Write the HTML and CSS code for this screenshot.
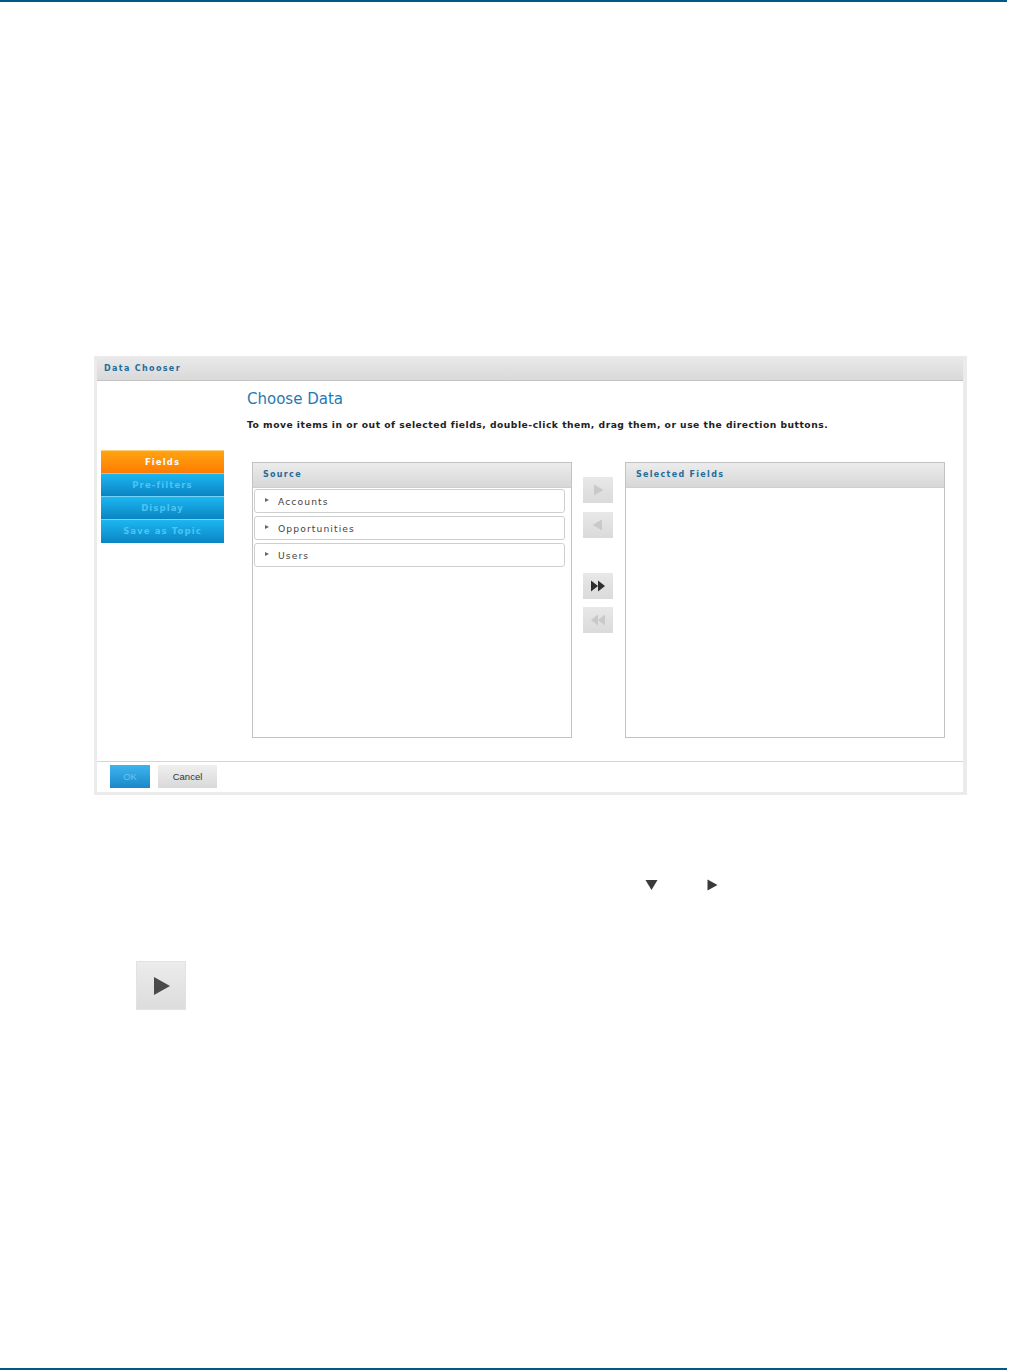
FILE: index.html
```html
<!DOCTYPE html>
<html>
<head>
<meta charset="utf-8">
<link rel="stylesheet" href="styles.css">
</head>
<body>
<div class="topline"></div>
<div class="page">
  <div class="dialog">
    <div class="dlg-header">Data Chooser</div>
    <div class="dlg-body">
      <div class="dlg-main">
        <nav class="nav">
          <div class="nav-item active">Fields</div>
          <div class="nav-item">Pre-filters</div>
          <div class="nav-item">Display</div>
          <div class="nav-item">Save as Topic</div>
        </nav>
        <div class="content">
          <h1 class="title">Choose Data</h1>
          <p class="instr">To move items in or out of selected fields, double-click them, drag them, or use the direction buttons.</p>
          <div class="chooser">
            <div class="panel">
              <div class="panel-head">Source</div>
              <div class="panel-body">
                <div class="item"><span class="tri"></span>Accounts</div>
                <div class="item"><span class="tri"></span>Opportunities</div>
                <div class="item"><span class="tri"></span>Users</div>
              </div>
            </div>
            <div class="arrows">
              <div class="abtn first"><svg width="12" height="12" viewBox="0 0 12 12"><path d="M2 0.5 L11.5 6 L2 11.5 Z" fill="#c9c9c9"/></svg></div>
              <div class="abtn b2"><svg width="12" height="12" viewBox="0 0 12 12"><path d="M10 0.5 L0.5 6 L10 11.5 Z" fill="#c9c9c9"/></svg></div>
              <div class="abtn gap"><svg width="16" height="12" viewBox="0 0 16 12"><path d="M1 0.5 L8 6 L1 11.5 Z M8 0.5 L15 6 L8 11.5 Z" fill="#2e2e2e"/></svg></div>
              <div class="abtn b4"><svg width="16" height="12" viewBox="0 0 16 12"><path d="M15 0.5 L8 6 L15 11.5 Z M8 0.5 L1 6 L8 11.5 Z" fill="#c9c9c9"/></svg></div>
            </div>
            <div class="panel">
              <div class="panel-head">Selected Fields</div>
              <div class="panel-body"></div>
            </div>
          </div>
        </div>
      </div>
      <div class="dlg-footer">
        <div class="btn ok">OK</div>
        <div class="btn cancel">Cancel</div>
      </div>
    </div>
  </div>
  <div class="glyphs">
    <svg class="g-down" width="13" height="12" viewBox="0 0 13 12"><path d="M0.5 1 L12.5 1 L6.5 11 Z" fill="#3a3a3a"/></svg>
    <svg class="g-right" width="11" height="12" viewBox="0 0 11 12"><path d="M0.5 0.5 L10.5 6 L0.5 11.5 Z" fill="#3a3a3a"/></svg>
  </div>
  <div class="playbtn"><svg width="20" height="20" viewBox="0 0 20 20"><path d="M2 1 L18 10 L2 19 Z" fill="#4a4a4a"/></svg></div>
</div>
<div class="bottomline"></div>
</body>
</html>
```

FILE: styles.css
```css
html, body {
  margin: 0;
  padding: 0;
  background: #fff;
  font-family: "DejaVu Sans", Verdana, sans-serif;
}
.topline {
  height: 2px;
  width: 1007px;
  background: #005a87;
}
.page {
  height: 1366px;
  display: flex;
  flex-direction: column;
}
.dialog {
  margin-top: 354px;
  margin-left: 94px;
  width: 873px;
  height: 439px;
  box-sizing: border-box;
  background: #ebebeb;
  padding: 1px 4px 3px 3px;
  display: flex;
  flex-direction: column;
}
.dlg-header {
  height: 23px;
  border-bottom: 1px solid #c4c4c4;
  background: linear-gradient(#e9e9e9, #d9d9d9);
  color: #1f6c9b;
  font-weight: bold;
  font-size: 8px;
  letter-spacing: 1.35px;
  line-height: 23px;
  padding-left: 7px;
}
.dlg-body {
  flex: 1;
  background: #fff;
  display: flex;
  flex-direction: column;
}
.dlg-main {
  flex: 1;
  display: flex;
}
.nav {
  margin-top: 69px;
  margin-left: 4px;
  width: 123px;
  display: flex;
  flex-direction: column;
}
.nav-item {
  height: 22px;
  line-height: 22px;
  text-align: center;
  font-size: 8.5px;
  font-weight: bold;
  letter-spacing: 1.1px;
  color: #4cc4f4;
  background: linear-gradient(#1cb6f2, #0a84c2);
  border-top: 1px solid #74d3f8;
}
.nav-item.active {
  color: #fff;
  background: linear-gradient(#ffa412, #ff7c00);
  border-top: 1px solid #ffd07a;
}
.nav-item:last-child {
  height: 23px;
}
.content {
  margin-left: 23px;
  display: flex;
  flex-direction: column;
}
.title {
  margin: 8px 0 0 0;
  font-size: 15px;
  font-weight: normal;
  color: #1f7ab3;
  line-height: 20px;
}
.instr {
  margin: 10px 0 0 0;
  font-size: 9.2px;
  font-weight: bold;
  letter-spacing: 0.5px;
  color: #222;
  line-height: 12px;
}
.chooser {
  margin-top: 31px;
  margin-left: 5px;
  display: flex;
}
.panel {
  width: 320px;
  height: 276px;
  box-sizing: border-box;
  border: 1px solid #c2c2c2;
  display: flex;
  flex-direction: column;
}
.panel-head {
  height: 25px;
  box-sizing: border-box;
  background: linear-gradient(#ececec, #d7d7d7);
  border-bottom: 1px solid #cfcfcf;
  color: #1f6c9b;
  font-weight: bold;
  font-size: 8px;
  letter-spacing: 1.3px;
  line-height: 24px;
  padding-left: 10px;
}
.panel-body {
  flex: 1;
  padding: 1px 6px 0 1px;
  display: flex;
  flex-direction: column;
  gap: 3px;
}
.item {
  height: 24px;
  box-sizing: border-box;
  border: 1px solid #cfcfcf;
  border-radius: 3px;
  display: flex;
  align-items: center;
  font-size: 9.2px;
  letter-spacing: 1.1px;
  color: #444;
  padding-left: 10px;
}
.tri {
  width: 0;
  height: 0;
  border-left: 4px solid #666;
  border-top: 2.5px solid transparent;
  border-bottom: 2.5px solid transparent;
  margin-right: 9px;
  margin-top: -2px;
}
.arrows {
  width: 30px;
  margin: 0 12px 0 11px;
  display: flex;
  flex-direction: column;
}
.abtn {
  width: 30px;
  height: 26px;
  background: linear-gradient(#e8e8e8, #dadada);
  display: flex;
  align-items: center;
  justify-content: center;
}
.abtn.first {
  margin-top: 15px;
}
.abtn.b2 {
  margin-top: 9px;
}
.abtn.gap {
  margin-top: 35px;
}
.abtn.b4 {
  margin-top: 8px;
}
.dlg-footer {
  height: 31px;
  border-top: 1px solid #d4d4d4;
  display: flex;
  align-items: flex-start;
  padding-top: 3px;
  padding-left: 13px;
  gap: 8px;
  box-sizing: border-box;
}
.btn {
  height: 23px;
  display: flex;
  align-items: center;
  justify-content: center;
  font-family: "Liberation Sans", Arial, sans-serif;
  font-size: 9.5px;
}
.btn.ok {
  width: 40px;
  background: linear-gradient(#3eb4ef, #1a88c8);
  color: #62c6f4;
}
.btn.cancel {
  width: 59px;
  background: linear-gradient(#efefef, #d9d9d9);
  color: #333;
}
.glyphs {
  margin-top: 84px;
  margin-left: 645px;
  height: 12px;
  display: flex;
  gap: 49px;
}
.playbtn {
  margin-top: 70px;
  margin-left: 136px;
  width: 50px;
  height: 49px;
  box-sizing: border-box;
  border: 1px solid #e2e2e2;
  background: linear-gradient(#ececec, #dcdcdc);
  display: flex;
  align-items: center;
  justify-content: center;
}
.playbtn svg {
  margin-left: 2px;
}
.bottomline {
  height: 2px;
  width: 1007px;
  background: #005a87;
}
```
